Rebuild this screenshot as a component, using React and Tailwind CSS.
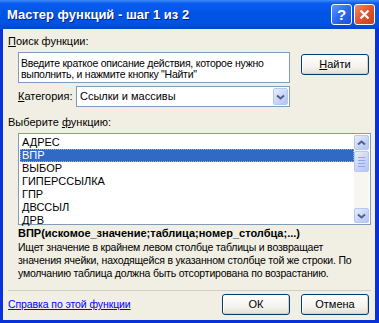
const ITEMS = ['АДРЕС', 'ВПР', 'ВЫБОР', 'ГИПЕРССЫЛКА', 'ГПР', 'ДВССЫЛ', 'ДРВ']

const Arrow = ({ down }) => (
  <svg width="9" height="6" viewBox="0 0 9 6">
    <path
      d={down ? 'M1 1.5 L4.5 4.5 L8 1.5' : 'M1 4.5 L4.5 1.5 L8 4.5'}
      fill="none"
      stroke="#4d6185"
      strokeWidth="2"
    />
  </svg>
)

const ScrollBtn = ({ children, className = '' }) => (
  <div
    className={`flex items-center justify-center rounded-[2px] border border-[#b4c8f6] bg-[linear-gradient(135deg,#e6eefc_0%,#c6d3f7_60%,#b4c5f0_100%)] ${className}`}
  >
    {children}
  </div>
)

const XpButton = ({ children, className = '' }) => (
  <button
    className={`flex items-center justify-center rounded-[3px] border border-[#003c74] bg-[linear-gradient(to_bottom,#ffffff_0%,#f4f3ee_60%,#e3e0d6_100%)] text-[11px] text-black shadow-[inset_-1px_-1px_0_#d6d0c5,inset_1px_1px_0_#ffffff] ${className}`}
  >
    {children}
  </button>
)

export default function App() {
  return (
    <div className="flex h-[323px] w-[379px] flex-col bg-[#0831d9] font-['Liberation_Sans',Arial,sans-serif] text-[11px] leading-[13px] text-black">
      {/* title bar */}
      <div className="flex h-[29px] shrink-0 items-center bg-[linear-gradient(to_bottom,#3d8bf7_0%,#0a5cf0_12%,#0055e5_45%,#0053e1_80%,#0046d0_100%)] pl-[7px] pr-[4px]">
        <span className="flex-1 text-[13px] font-bold text-white [text-shadow:1px_1px_0_#0a1e8a]">
          Мастер функций - шаг 1 из 2
        </span>
        <div className="flex h-[21px] w-[21px] items-center justify-center rounded-[3px] border border-white bg-[linear-gradient(135deg,#5b97fb_0%,#2b6af0_50%,#1a50d6_100%)] text-[15px] font-bold text-white">
          ?
        </div>
        <div className="ml-[2px] flex h-[21px] w-[21px] items-center justify-center rounded-[3px] border border-white bg-[linear-gradient(135deg,#f08a6a_0%,#e0542f_50%,#c7401d_100%)]">
          <svg width="11" height="11" viewBox="0 0 11 11">
            <path d="M1.5 1.5 L9.5 9.5 M9.5 1.5 L1.5 9.5" stroke="#fff" strokeWidth="2.2" />
          </svg>
        </div>
      </div>

      {/* client */}
      <div className="mb-[3px] ml-[3px] mr-[4px] flex flex-1 flex-col bg-[#f1efe3] pl-[5px] pr-[4px]">
        <div className="mt-[6px]">
          <span className="underline">П</span>оиск функции:
        </div>

        <div className="mt-[4px] flex items-start pl-[10px]">
          <div className="h-[31px] w-[272px] whitespace-nowrap border border-[#7f9db9] bg-white px-[2px] pt-[5px] text-[10.5px] leading-[11px] tracking-[-0.25px]">
            Введите краткое описание действия, которое нужно
            <br />
            выполнить, и нажмите кнопку "Найти"
          </div>
          <XpButton className="ml-[11px] mt-[2px] h-[21px] w-[68px]">
            <span className="underline">Н</span>айти
          </XpButton>
        </div>

        <div className="mt-[3px] flex items-center pl-[10px]">
          <span className="w-[58px]">
            <span className="underline">К</span>атегория:
          </span>
          <div className="flex h-[21px] w-[214px] items-center border border-[#7f9db9] bg-white pl-[3px] pr-[1px]">
            <span className="flex-1">Ссылки и массивы</span>
            <ScrollBtn className="h-[17px] w-[15px]">
              <Arrow down />
            </ScrollBtn>
          </div>
        </div>

        <div className="mt-[9px]">
          Выберите <span className="underline">ф</span>ункцию:
        </div>

        <div className="ml-[10px] mt-[4px] flex h-[92px] w-[353px] border border-[#7f9db9] bg-white p-[1px]">
          <div className="flex-1 pt-[1px]">
            {ITEMS.map((item, i) => (
              <div
                key={item}
                className={
                  i === 1
                    ? 'h-[13px] border border-dotted border-[#f0a030] bg-[#316ac5] pl-[1px] leading-[11px] text-white'
                    : 'h-[13px] pl-[2px]'
                }
              >
                {item}
              </div>
            ))}
          </div>
          <div className="flex w-[15px] flex-col bg-[#f7f6f1]">
            <ScrollBtn className="h-[15px]">
              <Arrow />
            </ScrollBtn>
            <ScrollBtn className="mt-[1px] h-[21px] flex-col gap-[2px]">
              <div className="h-px w-[7px] bg-[#8fa8e8]" />
              <div className="h-px w-[7px] bg-[#8fa8e8]" />
              <div className="h-px w-[7px] bg-[#8fa8e8]" />
              <div className="h-px w-[7px] bg-[#8fa8e8]" />
            </ScrollBtn>
            <div className="flex-1" />
            <ScrollBtn className="h-[15px]">
              <Arrow down />
            </ScrollBtn>
          </div>
        </div>

        <div className="ml-[10px] mt-[2px] font-bold">ВПР(искомое_значение;таблица;номер_столбца;...)</div>
        <div className="ml-[10px] mt-[1px] whitespace-nowrap text-[10.5px] tracking-[-0.2px]">
          Ищет значение в крайнем левом столбце таблицы и возвращает
          <br />
          значения ячейки, находящейся в указанном столбце той же строки. По
          <br />
          умолчанию таблица должна быть отсортирована по возрастанию.
        </div>

        <div className="mt-[10px] h-px bg-[#d0d0bf]" />

        <div className="mt-[3px] flex items-center">
          <span className="flex-1 text-[10.5px] tracking-[-0.1px] text-[#0000ff] underline">Справка по этой функции</span>
          <XpButton className="h-[21px] w-[68px]">ОК</XpButton>
          <XpButton className="ml-[11px] mr-[2px] h-[21px] w-[68px]">Отмена</XpButton>
        </div>
      </div>
    </div>
  )
}
